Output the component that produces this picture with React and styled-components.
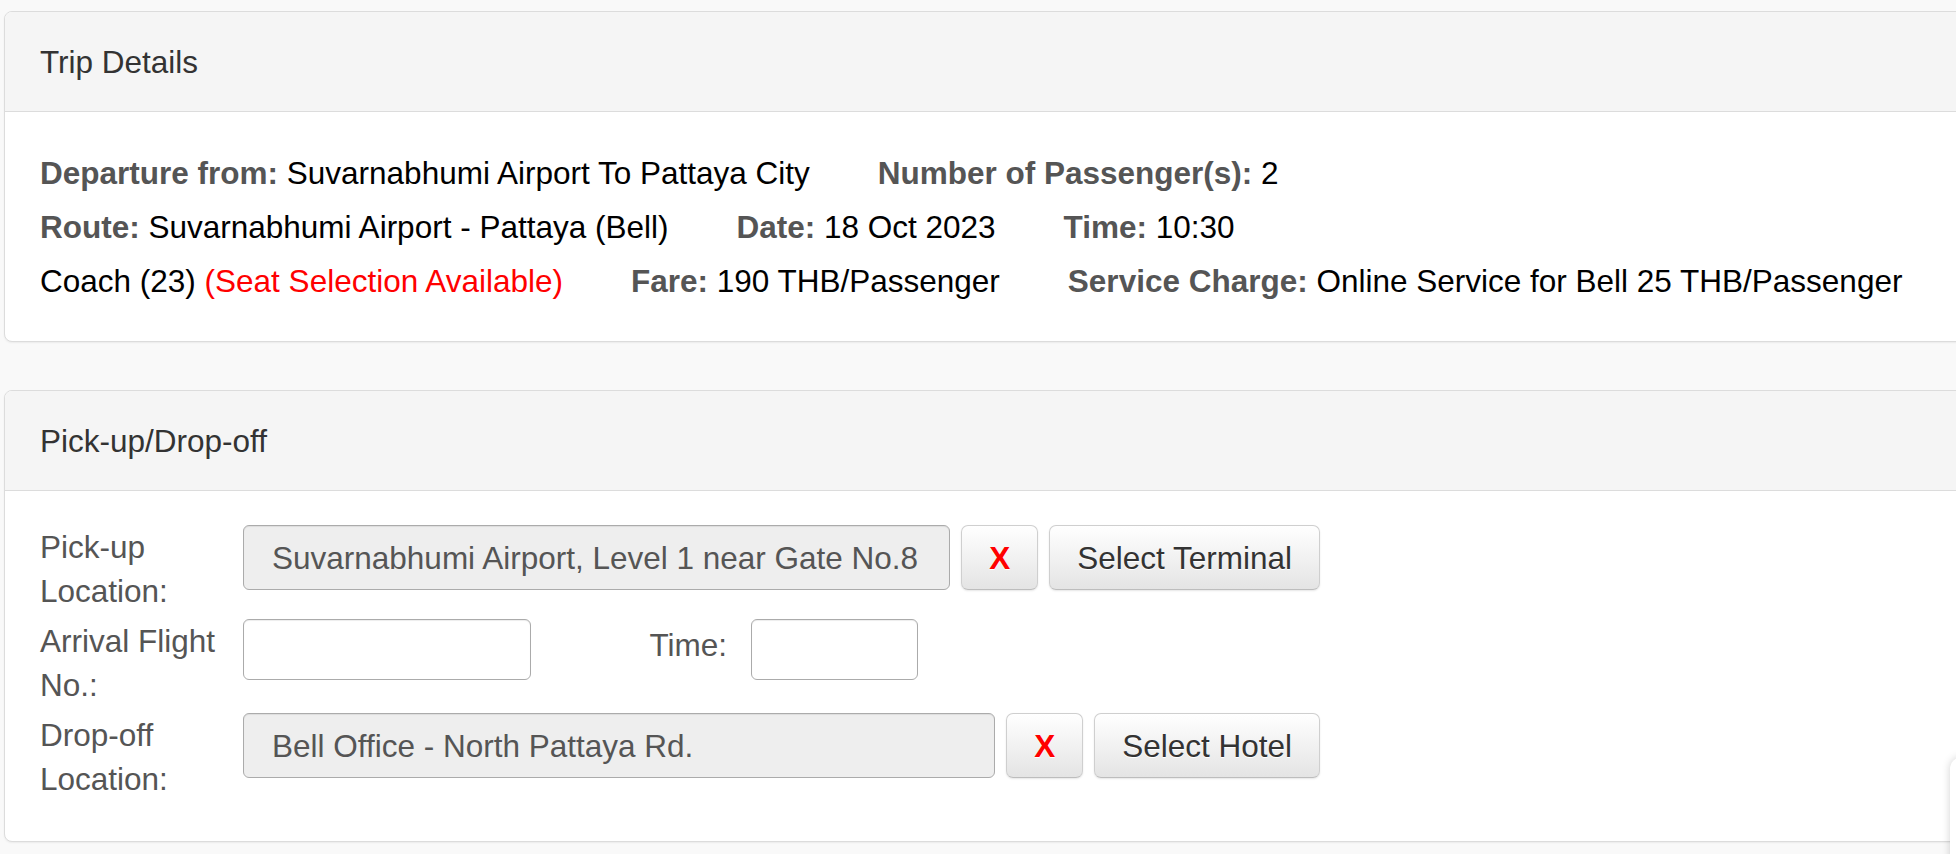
import React from "react";
import styled, { createGlobalStyle } from "styled-components";

const GlobalStyle = createGlobalStyle`
  html, body {
    margin: 0;
    padding: 0;
    overflow: hidden;
    background: #f9f9f9;
  }
  body {
    font-family: "Liberation Sans", Arial, sans-serif;
    font-size: 31.5px;
    line-height: 44px;
    color: #333;
  }
`;

const Page = styled.div`
  padding: 11px 0 0 4px;
  min-height: 843px;
`;

const Panel = styled.div`
  width: 2100px;
  background: #fff;
  border: 1px solid #dcdcdc;
  border-radius: 8px;
  box-shadow: 0 1px 2px rgba(0, 0, 0, 0.06);
  margin-bottom: 48px;
  overflow: hidden;
`;

const PanelHeading = styled.div`
  background: #f5f5f5;
  border-bottom: 1px solid #dcdcdc;
  padding: 28px 35px 27px;
  color: #333;
`;

const PanelBody = styled.div`
  padding: ${(p) => p.$pad};
`;

const InfoLine = styled.div`
  display: flex;
  column-gap: 68px;
  margin-bottom: 10px;
  color: #000;
  white-space: nowrap;
`;

const Label = styled.b`
  color: #555;
`;

const Red = styled.span`
  color: #f00;
`;

const FormRow = styled.div`
  display: flex;
  align-items: flex-start;
  margin-bottom: 6px;
`;

const FieldLabel = styled.div`
  width: 203px;
  flex-shrink: 0;
  color: #555;
`;

const Controls = styled.div`
  display: flex;
  align-items: center;
  gap: 11px;
  width: 1077px;
`;

const TextBox = styled.div`
  box-sizing: border-box;
  height: ${(p) => p.$h || 65}px;
  width: ${(p) => (p.$w ? `${p.$w}px` : "auto")};
  flex: ${(p) => (p.$w ? "none" : 1)};
  background: ${(p) => (p.$readonly ? "#eeeeee" : "#fff")};
  border: 1px solid #ababab;
  border-radius: 6px;
  padding: 0 28px;
  display: flex;
  align-items: center;
  color: #555;
  white-space: nowrap;
  overflow: hidden;
  box-shadow: inset 0 1px 1px rgba(0, 0, 0, 0.075);
`;

const Button = styled.button`
  box-sizing: border-box;
  height: 65px;
  padding: 0 ${(p) => (p.$narrow ? 0 : 27)}px;
  width: ${(p) => (p.$narrow ? "77px" : "auto")};
  font-family: inherit;
  font-size: 31.5px;
  line-height: 44px;
  color: ${(p) => (p.$danger ? "#f00" : "#333")};
  font-weight: ${(p) => (p.$danger ? "bold" : "normal")};
  background: linear-gradient(to bottom, #ffffff 0%, #e4e4e4 100%);
  border: 1px solid #cfcfcf;
  border-bottom-color: #bdbdbd;
  border-radius: 7px;
  text-shadow: 0 1px 0 #fff;
  box-shadow: inset 0 1px 0 rgba(255, 255, 255, 0.15), 0 1px 2px rgba(0, 0, 0, 0.1);
  flex-shrink: 0;
`;

const TimeLabel = styled.div`
  width: 196px;
  padding-right: 24px;
  text-align: right;
  color: #555;
  margin-top: 4px;
  flex-shrink: 0;
`;

const FlightRow = styled.div`
  display: flex;
  align-items: flex-start;
`;

const Widget = styled.div`
  position: fixed;
  left: 1950px;
  top: 757px;
  width: 240px;
  height: 240px;
  background: #fff;
  border-radius: 12px;
  box-shadow: 0 0 8px rgba(0, 0, 0, 0.18);
`;

export default function App() {
  return (
    <>
      <GlobalStyle />
      <Page>
        <Panel>
          <PanelHeading>Trip Details</PanelHeading>
          <PanelBody $pad="39px 35px 28px">
            <InfoLine>
              <span>
                <Label>Departure from:</Label> Suvarnabhumi Airport To Pattaya City
              </span>
              <span>
                <Label>Number of Passenger(s):</Label> 2
              </span>
            </InfoLine>
            <InfoLine>
              <span>
                <Label>Route:</Label> Suvarnabhumi Airport - Pattaya (Bell)
              </span>
              <span>
                <Label>Date:</Label> 18 Oct 2023
              </span>
              <span>
                <Label>Time:</Label> 10:30
              </span>
            </InfoLine>
            <InfoLine>
              <span>
                Coach (23) <Red>(Seat Selection Available)</Red>
              </span>
              <span>
                <Label>Fare:</Label> 190 THB/Passenger
              </span>
              <span>
                <Label>Service Charge:</Label> Online Service for Bell 25 THB/Passenger
              </span>
            </InfoLine>
          </PanelBody>
        </Panel>

        <Panel>
          <PanelHeading>Pick-up/Drop-off</PanelHeading>
          <PanelBody $pad="34px 35px 34px">
            <FormRow>
              <FieldLabel>Pick-up Location:</FieldLabel>
              <Controls>
                <TextBox $readonly>Suvarnabhumi Airport, Level 1 near Gate No.8</TextBox>
                <Button $narrow $danger>X</Button>
                <Button>Select Terminal</Button>
              </Controls>
            </FormRow>
            <FormRow>
              <FieldLabel>Arrival Flight No.:</FieldLabel>
              <FlightRow>
                <TextBox $w={288} $h={61} />
                <TimeLabel>Time:</TimeLabel>
                <TextBox $w={167} $h={61} />
              </FlightRow>
            </FormRow>
            <FormRow>
              <FieldLabel>Drop-off Location:</FieldLabel>
              <Controls>
                <TextBox $readonly>Bell Office - North Pattaya Rd.</TextBox>
                <Button $narrow $danger>X</Button>
                <Button>Select Hotel</Button>
              </Controls>
            </FormRow>
          </PanelBody>
        </Panel>
      </Page>
      <Widget />
    </>
  );
}
